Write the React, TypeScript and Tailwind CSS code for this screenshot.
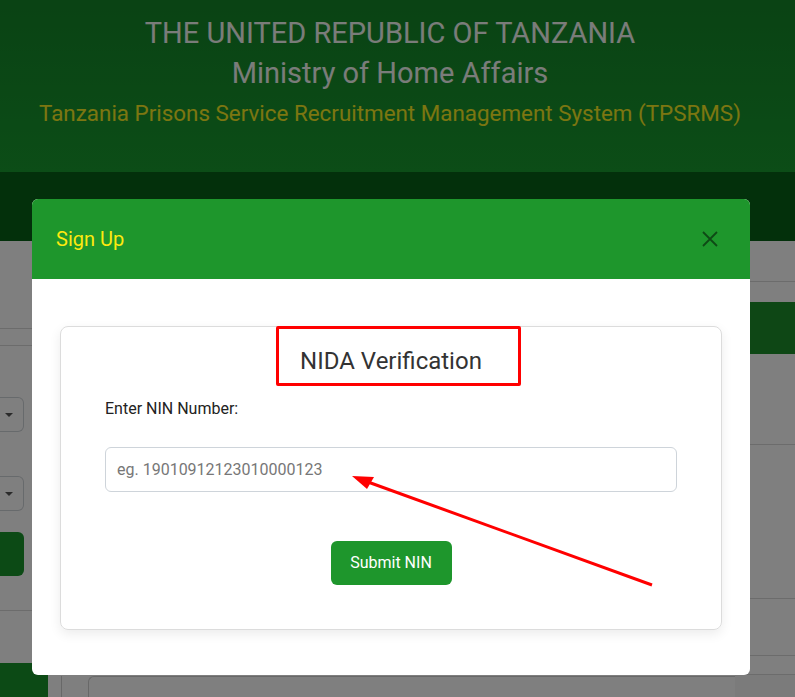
export default function App() {
  return (
    <div className="relative w-[795px] h-[697px] overflow-hidden bg-white font-['Roboto',sans-serif]">
      {/* Page behind the dialog */}
      <header className="h-[172px] bg-gradient-to-b from-[#148628] to-[#189a2e] pr-[15px] pt-[13px] text-center">
        <h1 className="text-[29px] leading-[40px] text-[#f4f8f4]">THE UNITED REPUBLIC OF TANZANIA</h1>
        <h2 className="text-[29px] leading-[40px] text-[#f4f8f4]">Ministry of Home Affairs</h2>
        <p className="text-[22.4px] leading-[41px] text-[#f8ec22]">
          Tanzania Prisons Service Recruitment Management System (TPSRMS)
        </p>
      </header>
      <nav className="h-[69px] bg-[#066116]" />

      <div className="flex h-[456px]">
        {/* left form column */}
        <div className="flex w-[48px] flex-col">
          <div className="h-[88px] w-[32px] border-b border-[#d8d8d8]" />
          <div className="h-[17px] w-[32px] border-b border-[#d8d8d8]" />
          <div className="mt-[51px] flex h-[35px] w-[24px] items-center rounded-r-md border border-l-0 border-[#cfd4d8] pl-[5px]">
            <span className="h-0 w-0 border-x-[4px] border-t-[4px] border-x-transparent border-t-[#555]" />
          </div>
          <div className="mt-[44px] flex h-[35px] w-[24px] items-center rounded-r-md border border-l-0 border-[#cfd4d8] pl-[5px]">
            <span className="h-0 w-0 border-x-[4px] border-t-[4px] border-x-transparent border-t-[#555]" />
          </div>
          <div className="mt-[21px] h-[44px] w-[24px] rounded-r-md bg-[#18942a]" />
          <div className="mt-[34px] w-[32px] border-t border-[#d8d8d8]" />
          <div className="mt-auto h-[34px] w-[48px] bg-[#18942a]" />
        </div>

        {/* main column */}
        <div className="flex flex-1 flex-col">
          <div className="mt-auto flex h-[21px]">
            <div className="ml-[13px] w-[27px] border-l border-[#d0d0d0]" />
            <div className="flex-1 rounded-tl-md border-l border-t border-[#d0d0d0]" />
          </div>
        </div>

        {/* right column */}
        <div className="flex w-[60px] flex-col">
          <div className="h-[41px] border-b border-[#d8d8d8]" />
          <div className="mt-[20px] h-[52px] bg-[#1c8e2a]" />
          <div className="h-[91px] border-b border-[#d8d8d8]" />
          <div className="h-[154px] border-b border-[#d8d8d8]" />
          <div className="h-[57px] border-b border-[#d8d8d8]" />
          <div className="h-[19px] border-b border-[#d8d8d8]" />
          <div className="flex-1 bg-[#f7f7f7]" />
        </div>
      </div>

      {/* backdrop */}
      <div className="absolute inset-0 bg-black/50" />

      {/* Sign up dialog */}
      <div className="absolute left-[32px] top-[199px] w-[718px] overflow-hidden rounded-md bg-white">
        <div className="flex h-[80px] items-center justify-between bg-[#1e962c] pl-[24px] pr-[32px]">
          <span className="text-[20px] text-[#fde910]">Sign Up</span>
          <svg width="16" height="16" viewBox="0 0 16 16" className="opacity-50">
            <path d="M1 1L15 15M15 1L1 15" stroke="#000" strokeWidth="1.8" />
          </svg>
        </div>

        <div className="px-[28px] pb-[45px] pt-[47px]">
          <div className="relative rounded-lg border border-[#dcdcdc] px-[44px] pb-[44px] pt-[18px] shadow-[0_4px_12px_rgba(0,0,0,0.08)]">
            <div className="pointer-events-none absolute left-[215px] top-[-1px] h-[60px] w-[245px] rounded-[2px] border-[3px] border-[#ff0000]" />
            <h4 className="text-center text-[24px] leading-[32px] text-[#333]">NIDA Verification</h4>
            <label className="mt-[22px] block text-[16px] leading-[20px] text-[#222]">Enter NIN Number:</label>
            <input
              type="text"
              placeholder="eg. 19010912123010000123"
              className="mt-[28px] block h-[45px] w-full rounded-md border border-[#ced4da] px-[11px] text-[16px] text-[#333] outline-none placeholder:text-[#777]"
            />
            <button className="mx-auto mt-[49px] block h-[44px] w-[121px] rounded-md bg-[#1e962c] text-[16px] text-white">
              Submit NIN
            </button>
          </div>
        </div>
      </div>

      {/* annotation arrow */}
      <svg className="pointer-events-none absolute inset-0" width="795" height="697" viewBox="0 0 795 697">
        <line x1="652" y1="585" x2="368" y2="482" stroke="#ff0000" strokeWidth="3" />
        <polygon points="352,476 374,477 367,489" fill="#ff0000" />
      </svg>
    </div>
  );
}
